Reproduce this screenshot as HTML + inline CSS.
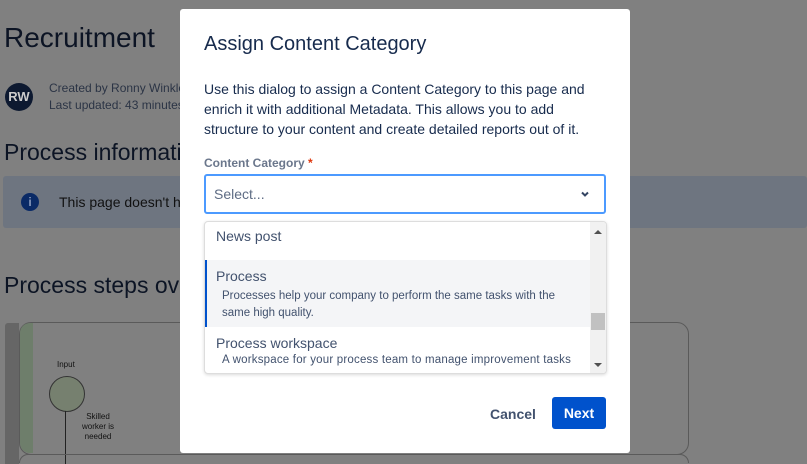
<!DOCTYPE html>
<html><head><style>
html,body{margin:0;width:807px;height:464px;overflow:hidden}
body{background:#808080;font-family:"Liberation Sans",sans-serif;position:relative}
.a{position:absolute}
</style></head><body>
<div class="a" style="left:4px;top:22px;font-size:28px;color:#0c1424">Recruitment</div>
<div class="a" style="left:5px;top:83px;width:28px;height:28px;border-radius:50%;background:#0d1930;color:#ccc;font-size:13px;font-weight:bold;text-align:center;line-height:28px">RW</div>
<div class="a" style="left:49px;top:80px;font-size:12px;color:#2b3445;line-height:17px">Created by Ronny Winkler<br>Last updated: 43 minutes</div>
<div class="a" style="left:4px;top:139px;font-size:23px;color:#0c1424">Process information</div>
<div class="a" style="left:3px;top:176px;width:804px;height:52px;background:#6e7580;border-radius:3px"></div>
<div class="a" style="left:21px;top:193px;width:18px;height:18px;border-radius:50%;background:#0a2a66;color:#8899bb;font-size:12px;font-weight:bold;text-align:center;line-height:18px">i</div>
<div class="a" style="left:59px;top:194px;font-size:14px;color:#111">This page doesn't have</div>
<div class="a" style="left:4px;top:272px;font-size:23px;color:#0c1424">Process steps overview</div>
<div class="a" style="left:5px;top:323px;width:14px;height:141px;background:#666;border-radius:3px 0 0 0"></div>
<div class="a" style="left:19px;top:322px;width:668px;height:131px;border:1px solid #5a5a5a;border-radius:12px"></div>
<div class="a" style="left:20px;top:323px;width:13px;height:130px;background:#6e7e6b;border-radius:10px 0 0 10px"></div>
<div class="a" style="left:57px;top:360px;font-size:8px;color:#111">Input</div>
<div class="a" style="left:49px;top:376px;width:34px;height:34px;border-radius:50%;border:1px solid #333;background:#76806f"></div>
<div class="a" style="left:65px;top:411px;width:1px;height:53px;background:#222"></div>
<div class="a" style="left:82px;top:412px;font-size:8px;color:#111;text-align:center;line-height:10px">Skilled<br>worker is<br>needed</div>
<div class="a" style="left:19px;top:454px;width:668px;height:8px;border:1px solid #5a5a5a;border-bottom:0;border-radius:12px 12px 0 0"></div>

<div class="a" style="left:180px;top:9px;width:450px;height:444px;background:#fff;border-radius:3px">
<div class="a" style="left:24px;top:24px;font-size:20px;color:#172b4d">Assign Content Category</div>
<div class="a" style="left:24px;top:70px;width:395px;font-size:14px;line-height:20px;color:#172b4d">Use this dialog to assign a Content Category to this page and enrich it with additional Metadata. This allows you to add structure to your content and create detailed reports out of it.</div>
<div class="a" style="left:24px;top:147px;font-size:12px;font-weight:bold;color:#6b778c">Content Category<span style="color:#de350b"> *</span></div>
<div class="a" style="left:24px;top:165px;width:398px;height:36px;border:2px solid #4c9aff;border-radius:3px"></div>
<div class="a" style="left:34px;top:177px;font-size:14px;color:#5e6c84">Select...</div>
<svg class="a" style="left:399px;top:179px" width="12" height="12" viewBox="0 0 12 12"><path d="M3 4.5l3 3 3-3" stroke="#344563" stroke-width="2" fill="none"/></svg>
<div class="a" style="left:24px;top:212px;width:401px;height:151px;border:1px solid #ddd;border-radius:4px;box-shadow:0 1px 3px rgba(0,0,0,.15);overflow:hidden;background:#fff">
<div class="a" style="left:11px;top:6px;font-size:14px;color:#42526e">News post</div>
<div class="a" style="left:0;top:38px;width:385px;height:67px;background:#f4f5f7;border-left:2px solid #0052cc;box-sizing:border-box"></div>
<div class="a" style="left:11px;top:46px;font-size:14px;color:#42526e">Process</div>
<div class="a" style="left:17px;top:66px;width:355px;font-size:11.5px;line-height:17px;color:#42526e">Processes help your company to perform the same tasks with the same high quality.</div>
<div class="a" style="left:11px;top:113px;font-size:14px;color:#42526e">Process workspace</div>
<div class="a" style="left:17px;top:132px;font-size:11.5px;color:#42526e;letter-spacing:0.2px">A workspace for your process team to manage improvement tasks</div>
<div class="a" style="left:385px;top:0;width:16px;height:151px;background:#f1f1f1"></div>
<div class="a" style="left:386px;top:91px;width:14px;height:17px;background:#c1c1c1"></div>
<div class="a" style="left:389px;top:8px;width:0;height:0;border:4px solid transparent;border-bottom-color:#505050;border-top:0"></div>
<div class="a" style="left:389px;top:141px;width:0;height:0;border:4px solid transparent;border-top-color:#505050;border-bottom:0"></div>
</div>
<div class="a" style="left:310px;top:397px;font-size:14px;font-weight:bold;color:#42526e">Cancel</div>
<div class="a" style="left:372px;top:388px;width:54px;height:32px;background:#0052cc;border-radius:3px;color:#fff;font-size:14px;font-weight:bold;text-align:center;line-height:32px">Next</div>
</div>
</body></html>
